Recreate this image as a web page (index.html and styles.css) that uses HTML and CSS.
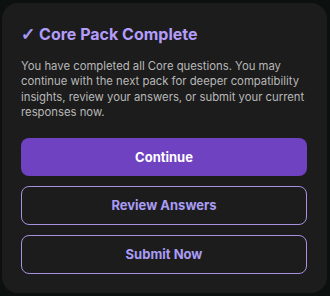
FILE: index.html
```html
<!DOCTYPE html>
<html lang="en">
<head>
    <meta charset="UTF-8">
    <meta name="viewport" content="width=device-width, initial-scale=1.0">
    <title>Core Pack Complete</title>
    <link rel="stylesheet" href="styles.css">
</head>
<body>
    <div class="card">
        <h2 class="card-title"><span class="check">✓</span> Core Pack Complete</h2>
        <p class="card-text">You have completed all Core questions. You may continue with the next pack for deeper compatibility insights, review your answers, or submit your current responses now.</p>
        <div class="actions">
            <button class="btn btn-primary">Continue</button>
            <button class="btn btn-outline">Review Answers</button>
            <button class="btn btn-outline">Submit Now</button>
        </div>
    </div>
</body>
</html>
```

FILE: styles.css
```css
body {
    margin: 0;
    background-color: #0c100f;
    font-family: Inter, "Noto Sans", sans-serif;
}
.card {
    margin: 3px 3px 0 2px;
    padding: 19px 19px 20px 19px;
    background-color: #1c1c1c;
    border-radius: 16px;
    height: 251px;
}
.card-title {
    margin: 0 0 13px;
    font-size: 16px;
    font-weight: 700;
    color: #b49cfb;
    line-height: 24px;
}
.check {
    font-family: "DejaVu Sans", sans-serif;
    font-weight: 700;
    font-size: 17px;
    -webkit-text-stroke: 0.7px #a99cf5;
    color: #a99cf5;
}
.card-text {
    margin: 0 0 17px;
    font-size: 11.3px;
    line-height: 15.4px;
    color: #b8b8b8;
}
.actions {
    display: flex;
    flex-direction: column;
    gap: 10px;
    margin-right: 1px;
}
.btn {
    height: 38px;
    border-radius: 8px;
    font-family: Inter, "Noto Sans", sans-serif;
    font-size: 13px;
    font-weight: 700;
    cursor: pointer;
}
.btn-primary {
    background-color: #6f42c1;
    color: #fff;
    border: none;
}
.btn-outline {
    height: 39px;
    background-color: transparent;
    color: #a99cf5;
    border: 1px solid #a890e0;
}
```
